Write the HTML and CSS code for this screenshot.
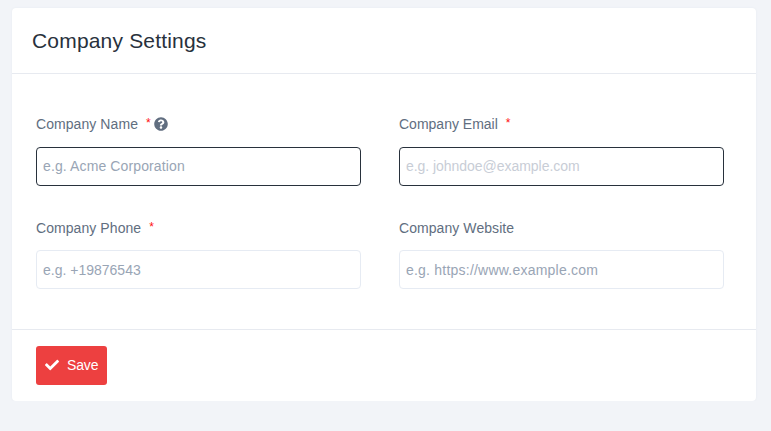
FILE: index.html
```html
<!DOCTYPE html>
<html lang="en">
<head>
<meta charset="utf-8">
<title>Company Settings</title>
<link rel="stylesheet" href="styles.css">
</head>
<body>
<form class="card">
  <h1 class="card-title">Company Settings</h1>
  <div class="fields">
    <div class="field first-row">
      <label for="name"><span class="label-text">Company Name</span> <sup>*</sup><svg class="help" viewBox="0 0 512 512"><path fill="currentColor" d="M504 256c0 136.997-111.043 248-248 248S8 392.997 8 256C8 119.083 119.043 8 256 8s248 111.083 248 248zM262.655 90c-54.497 0-89.255 22.957-116.549 63.758-3.536 5.286-2.353 12.415 2.715 16.258l34.699 26.31c5.205 3.947 12.621 3.008 16.665-2.122 17.864-22.658 30.113-35.797 57.303-35.797 20.429 0 45.698 13.148 45.698 32.958 0 14.976-12.363 22.667-32.534 33.976C247.128 238.528 216 254.941 216 296v4c0 6.627 5.373 12 12 12h56c6.627 0 12-5.373 12-12v-1.333c0-28.462 83.186-29.647 83.186-106.667 0-58.002-60.165-102-116.531-102zM256 338c-25.365 0-46 20.635-46 46 0 25.364 20.635 46 46 46s46-20.636 46-46c0-25.365-20.635-46-46-46z"/></svg></label>
      <input class="strong spaced" id="name" type="text" placeholder="e.g. Acme Corporation">
    </div>
    <div class="field first-row">
      <label for="email">Company Email <sup>*</sup></label>
      <input class="strong faint" id="email" type="email" placeholder="e.g. johndoe@example.com">
    </div>
    <div class="field">
      <label for="phone"><span class="label-text">Company Phone</span> <sup>*</sup></label>
      <input id="phone" type="tel" placeholder="e.g. +19876543">
    </div>
    <div class="field">
      <label for="site"><span class="label-text">Company Website</span></label>
      <input class="wide" id="site" type="text" placeholder="e.g. https://www.example.com">
    </div>
  </div>
  <div class="actions">
    <button type="button"><svg class="check" viewBox="0 0 512 512"><path fill="currentColor" d="M173.898 439.404l-166.4-166.4c-9.997-9.997-9.997-26.206 0-36.204l36.203-36.204c9.997-9.998 26.207-9.998 36.204 0L192 312.69 432.095 72.596c9.997-9.997 26.207-9.997 36.204 0l36.203 36.204c9.997 9.997 9.997 26.206 0 36.204l-294.4 294.401c-9.998 9.997-26.207 9.997-36.204-.001z"/></svg><span>Save</span></button>
  </div>
</form>
</body>
</html>
```

FILE: styles.css
```css
* { box-sizing: border-box; }
body {
  margin: 0;
  padding: 8px 15px 0 12px;
  background: #f2f4f8;
  font-family: "Liberation Sans", Arial, sans-serif;
  font-size: 14px;
  color: #616e80;
}
.card {
  height: 393px;
  background: #fff;
  border-radius: 4px;
  box-shadow: 0 0 2px #e4e8ee;
}
.card-title {
  height: 66px;
  margin: 0;
  padding: 0 20px;
  border-bottom: 1px solid #e7eaf0;
  font-size: 21px;
  font-weight: 400;
  line-height: 66px;
  letter-spacing: 0.18px;
  color: #28313c;
}
.fields {
  display: grid;
  grid-template-columns: 325px 325px;
  column-gap: 38px;
  row-gap: 31px;
  height: 255px;
  padding: 42px 24px 0;
  align-content: start;
}
.field { height: 72px; }
label {
  display: flex;
  align-items: center;
  height: 18px;
  margin-bottom: 13px;
  line-height: 18px;
}
.first-row { margin-top: -1px; height: 73px; }
.first-row label { margin-bottom: 14px; }
.label-text { letter-spacing: 0.07px; }
sup {
  margin: -3px 0 0 8px;
  font-size: 12px;
  line-height: 12px;
  color: #ff1010;
}
.help { width: 14px; height: 14px; margin-left: 3px; }
input {
  display: block;
  width: 100%;
  height: 39px;
  padding: 0 6px;
  border: 1px solid #e6ebf3;
  border-radius: 4px;
  background: #fff;
  font: inherit;
}
input::placeholder { color: #99a5b5; opacity: 1; }
.strong { padding-bottom: 2px; border-color: #28313c; }
.spaced { letter-spacing: 0.12px; }
.wide { letter-spacing: 0.22px; }
.faint { letter-spacing: -0.04px; }
.faint::placeholder { color: #c8cdd6; }
.actions {
  height: 72px;
  padding: 16px 24px;
  border-top: 1px solid #e7eaf0;
}
button {
  display: flex;
  align-items: center;
  width: 71px;
  height: 39px;
  padding: 0 0 1px 9px;
  border: 0;
  border-radius: 3px;
  background: #ed4040;
  color: #fff;
  font: inherit;
}
button span { margin-top: -1px; letter-spacing: -0.15px; }
.check { width: 14px; height: 14px; margin-right: 8px; }
```
